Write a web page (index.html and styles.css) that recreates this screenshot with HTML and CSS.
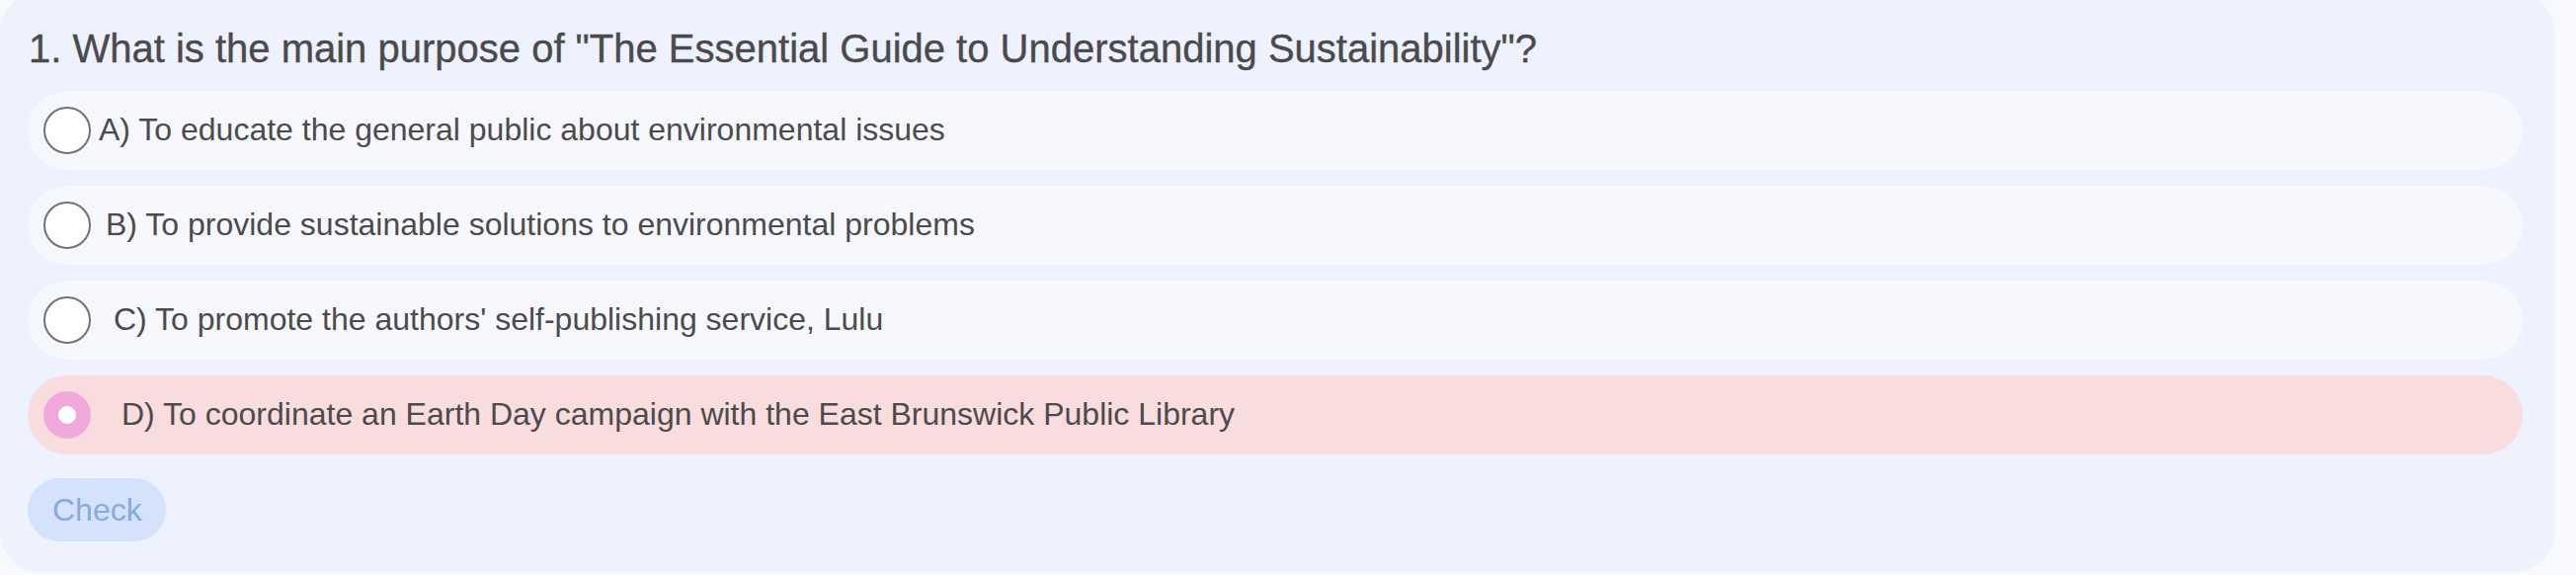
FILE: index.html
```html
<!DOCTYPE html>
<html lang="en">
<head>
<meta charset="utf-8">
<title>Quiz</title>
<link rel="stylesheet" href="styles.css">
</head>
<body>
<section class="card">
  <h2 class="question">1. What is the main purpose of "The Essential Guide to Understanding Sustainability"?</h2>
  <div class="options">
    <label class="option">
      <span class="radio"></span>
      <span class="label gap-a">A) To educate the general public about environmental issues</span>
    </label>
    <label class="option">
      <span class="radio"></span>
      <span class="label gap-b">B) To provide sustainable solutions to environmental problems</span>
    </label>
    <label class="option">
      <span class="radio"></span>
      <span class="label gap-c">C) To promote the authors' self-publishing service, Lulu</span>
    </label>
    <label class="option selected">
      <span class="radio checked"></span>
      <span class="label gap-d">D) To coordinate an Earth Day campaign with the East Brunswick Public Library</span>
    </label>
  </div>
  <button class="check" type="button">Check</button>
</section>
</body>
</html>
```
FILE: styles.css
```css
html, body {
  margin: 0;
  padding: 0;
  background: #f8f9fd;
}

body {
  font-family: "Liberation Sans", Arial, sans-serif;
  color: #4b4b4d;
}

.card {
  box-sizing: border-box;
  width: 2586px;
  margin-top: -8px;
  height: 587px;
  background: #eef2fe;
  border-radius: 40px;
  padding: 33px 32px 0 28px;
  display: flex;
  flex-direction: column;
  align-items: flex-start;
}

.question {
  margin: 0 0 0 1px;
  font-size: 40px;
  line-height: 48px;
  font-weight: 400;
  color: #4a4a4c;
  -webkit-text-stroke: 0.35px #4a4a4c;
}

.options {
  margin-top: 19px;
  display: flex;
  flex-direction: column;
  gap: 16px;
  align-self: stretch;
}

.option {
  display: flex;
  align-items: center;
  height: 80px;
  border-radius: 40px;
  background: #f6f8fe;
  padding-left: 16px;
}

.option.selected {
  background: #f9dcdd;
}

.radio {
  box-sizing: border-box;
  flex: 0 0 48px;
  width: 48px;
  height: 48px;
  border-radius: 50%;
  border: 2px solid #6d727e;
  background: #ffffff;
}

.radio.checked {
  border: 15px solid #f1a9dc;
  background: #ffffff;
}

.label {
  font-size: 32px;
  line-height: 40px;
  color: #4b4b4d;
  margin-top: -2px;
}

.gap-a { margin-left: 8px; }
.gap-b { margin-left: 15px; }
.gap-c { margin-left: 23px; }
.gap-d { margin-left: 31px; }

.check {
  margin-top: 24px;
  height: 64px;
  padding: 0 24px 0 25px;
  border: none;
  border-radius: 32px;
  background: #d4e3fb;
  color: #87aae4;
  font-family: "Liberation Sans", Arial, sans-serif;
  font-size: 32px;
  line-height: 64px;
  cursor: pointer;
}
```
